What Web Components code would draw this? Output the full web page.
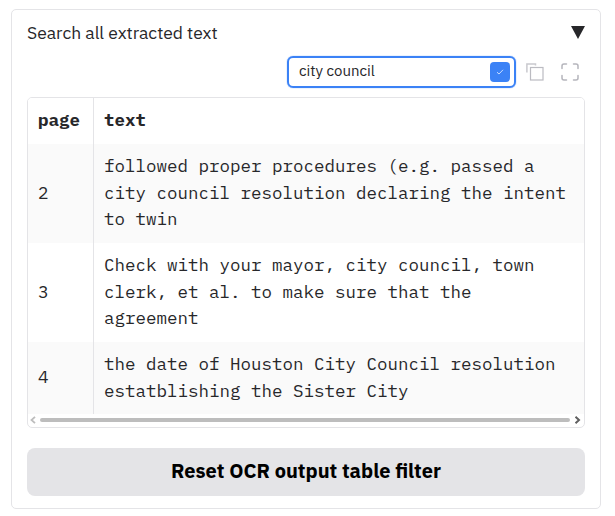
<!DOCTYPE html>
<html lang="en"><head><meta charset="utf-8"><title>Search all extracted text</title>
<style>
html,body{margin:0;background:#fff}
body{padding:9px 14px 7px 11px;color:#27272a;font-family:"IBM Plex Sans","Noto Sans",sans-serif}
</style></head><body>
<accordion-card label="Search all extracted text">
<table-toolbar value="city council"></table-toolbar>
<text-table>
<text-row head page="page">text</text-row>
<text-row odd page="2">followed proper procedures (e.g. passed a city council resolution declaring the intent to twin</text-row>
<text-row page="3">Check with your mayor, city council, town clerk, et al. to make sure that the agreement</text-row>
<text-row odd page="4">the date of Houston City Council resolution estatblishing the Sister City</text-row>
</text-table>
<wide-button>Reset OCR output table filter</wide-button>
</accordion-card>
<script>
const define=(name,html,fill)=>customElements.define(name,class extends HTMLElement{
  constructor(){super();this.attachShadow({mode:'open'}).innerHTML='<style>*{box-sizing:border-box}:host{box-sizing:border-box}</style>'+html;}
  connectedCallback(){if(fill)fill(this,this.shadowRoot);}
});
define('accordion-card',`<style>
:host{display:block;height:500px;border:1px solid #e4e4e7;border-radius:5px;padding:0 15px}
header{display:flex;justify-content:space-between;align-items:center;height:46px}
.label{font-size:17.5px;line-height:26px;white-space:nowrap}
svg{display:block;margin-bottom:2px}
</style><header><span class="label"></span><svg width="14" height="13" viewBox="0 0 14 13"><path d="M0 0H14L7 13Z" fill="#27272a"/></svg></header><slot></slot>`,
(e,r)=>r.querySelector('.label').textContent=e.getAttribute('label'));
define('table-toolbar',`<style>
:host{display:flex;height:32px;justify-content:flex-end;align-items:center;padding-right:6px}
.search{width:229px;height:32px;border:2px solid #3b82f6;border-radius:6px;display:flex;align-items:center;justify-content:space-between;padding:0 4px 0 10px;box-shadow:0 0 1px #3b82f6}
.value{font-size:15px;line-height:20px;margin-bottom:2px;white-space:nowrap}
.ok{width:20px;height:20px;border-radius:4px;background:#3b82f6;display:flex;align-items:center;justify-content:center}
svg{display:block}.copy{margin-left:10px}.full{margin-left:17px}
</style><div class="search"><span class="value"></span><span class="ok"><svg width="8" height="8" viewBox="0 0 8 8" fill="none" stroke="#c7dcff" stroke-width="1"><path d="M1 4.2 3 6 7 1.8"/></svg></span></div>
<svg class="copy" width="18" height="18" viewBox="0 0 18 18" fill="none"><path d="M.9 9.5V.9H9.5V2.5" stroke="#c9c9ce" stroke-width="1.5"/><rect x="4.5" y="4.5" width="12.5" height="12.5" stroke="#bbbbc1" stroke-width="1.2"/></svg>
<svg class="full" width="18" height="18" viewBox="0 0 18 18" fill="none" stroke="#b5b5bc" stroke-width="1.5" stroke-linecap="round" stroke-linejoin="round"><path d="M1 5.5V3a2 2 0 0 1 2-2H5.5M12.5 1H15a2 2 0 0 1 2 2V5.5M17 12.5V15a2 2 0 0 1-2 2H12.5M5.5 17H3a2 2 0 0 1-2-2V12.5"/></svg>`,
(e,r)=>r.querySelector('.value').textContent=e.getAttribute('value'));
define('text-table',`<style>
:host{display:block;height:331px;margin-top:9px;border:1px solid #e4e4e7;border-radius:5px;overflow:hidden}
.bar{height:12px;display:flex;align-items:center;padding:0 3px 0 2px;gap:4px}
.thumb{flex:1;height:4px;border-radius:2px;background:#bdbdbd}svg{display:block}
</style><slot></slot><div class="bar"><svg width="6" height="8" viewBox="0 0 6 8" fill="none" stroke="#bdbdbd" stroke-width="1.8"><path d="M5 .8 1.5 4 5 7.2"/></svg><div class="thumb"></div><svg width="7" height="8" viewBox="0 0 7 8" fill="none" stroke="#606060" stroke-width="2"><path d="M1.5 .8 5 4 1.5 7.2"/></svg></div>`);
define('text-row',`<style>
:host{display:grid;grid-template-columns:65px 1fr;min-height:99px;font:17.5px/26.35px "IBM Plex Mono","Liberation Mono",monospace;background:#fff}
:host([odd]){background:#fafafa}
:host([head]){font-weight:700;min-height:46px}
:host([page="4"]){min-height:72px}
div{padding:9.3px 10px}
.page{display:flex;align-items:center;padding:8px 10px 9.6px}
.text{border-left:1px solid #e4e4e7}
</style><div class="page"></div><div class="text"><slot></slot></div>`,
(e,r)=>r.querySelector('.page').textContent=e.getAttribute('page'));
define('wide-button',`<style>
:host{display:block;margin-top:20px}
button{display:flex;align-items:center;justify-content:center;width:100%;height:48px;border:0;border-radius:8px;background:#e4e4e7;color:#000;font:700 20px/28px "IBM Plex Sans","Noto Sans",sans-serif;padding:0 0 2px;white-space:nowrap}
</style><button><span><slot></slot></span></button>`);
</script></body></html>
